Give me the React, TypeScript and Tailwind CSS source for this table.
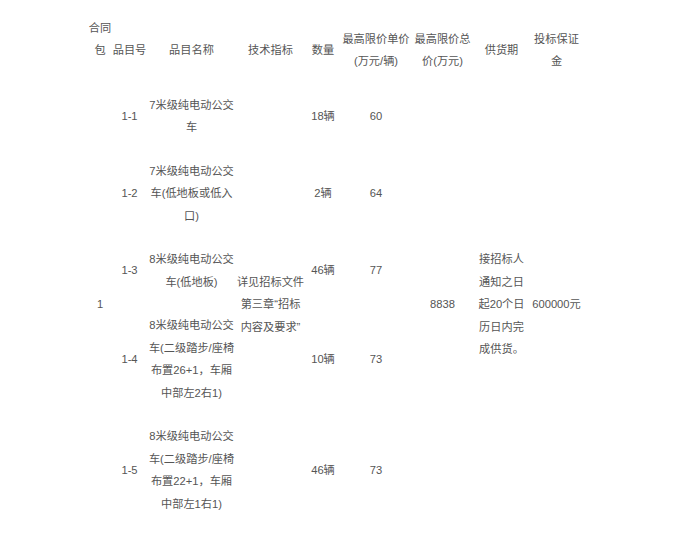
const rows = [
  { no: "1-1", name: "7米级纯电动公交车", qty: "18辆", price: "60" },
  { no: "1-2", name: "7米级纯电动公交车(低地板或低入口)", qty: "2辆", price: "64" },
  { no: "1-3", name: "8米级纯电动公交车(低地板)", qty: "46辆", price: "77" },
  { no: "1-4", name: "8米级纯电动公交车(二级踏步/座椅布置26+1，车厢中部左2右1)", qty: "10辆", price: "73" },
  { no: "1-5", name: "8米级纯电动公交车(二级踏步/座椅布置22+1，车厢中部左1右1)", qty: "46辆", price: "73" },
];

const cell = "px-0 py-[10.5px] text-center align-middle font-normal";

export default function App() {
  return (
    <div className="min-h-[534px] bg-white pt-[17px] pl-[88px] font-['Liberation_Sans','Noto_Sans_CJK_SC',sans-serif] text-[11.2px] leading-[22.5px] text-[#555555]">
      <table className="w-[496px] table-fixed border-collapse">
        <colgroup>
          <col className="w-[24px]" />
          <col className="w-[35px]" />
          <col className="w-[89px]" />
          <col className="w-[69px]" />
          <col className="w-[36px]" />
          <col className="w-[70px]" />
          <col className="w-[63px]" />
          <col className="w-[55px]" />
          <col className="w-[55px]" />
        </colgroup>
        <thead>
          <tr>
            <th className={cell}>
              <div className="-mt-[22px]">合同包</div>
            </th>
            <th className={cell}>品目号</th>
            <th className={cell}>品目名称</th>
            <th className={cell}>技术指标</th>
            <th className={cell}>数量</th>
            <th className={cell}>最高限价单价(万元/辆)</th>
            <th className={cell}>最高限价总价(万元)</th>
            <th className={cell}>供货期</th>
            <th className={cell}>投标保证金</th>
          </tr>
        </thead>
        <tbody>
          {rows.map((r, i) => (
            <tr key={r.no}>
              {i === 0 && (
                <td rowSpan={5} className={cell}>
                  1
                </td>
              )}
              <td className={cell}>{r.no}</td>
              <td className={cell}>{r.name}</td>
              {i === 0 && (
                <td rowSpan={5} className={cell}>
                  详见招标文件第三章“招标内容及要求”
                </td>
              )}
              <td className={cell}>{r.qty}</td>
              <td className={cell}>{r.price}</td>
              {i === 0 && (
                <>
                  <td rowSpan={5} className={cell}>
                    8838
                  </td>
                  <td rowSpan={5} className={cell}>
                    接招标人通知之日起20个日历日内完成供货。
                  </td>
                  <td rowSpan={5} className={cell}>
                    600000元
                  </td>
                </>
              )}
            </tr>
          ))}
        </tbody>
      </table>
    </div>
  );
}
